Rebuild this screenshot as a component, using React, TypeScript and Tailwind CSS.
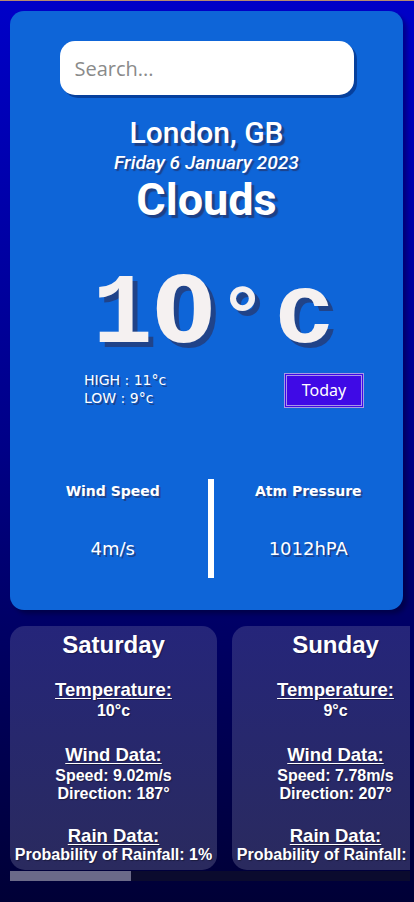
import React from 'react'

type Day = {
  name: string
  temp: string
  speed: string
  direction: string
  rain: string
}

const FORECAST: Day[] = [
  { name: 'Saturday', temp: '10°c', speed: '9.02m/s', direction: '187°', rain: '1%' },
  { name: 'Sunday', temp: '9°c', speed: '7.78m/s', direction: '207°', rain: '3%' },
  { name: 'Monday', temp: '8°c', speed: '6.41m/s', direction: '221°', rain: '12%' },
  { name: 'Tuesday', temp: '7°c', speed: '5.12m/s', direction: '245°', rain: '24%' },
  { name: 'Wednesday', temp: '9°c', speed: '8.33m/s', direction: '198°', rain: '40%' },
  { name: 'Thursday', temp: '11°c', speed: '6.07m/s', direction: '176°', rain: '8%' },
]

function ForecastCard({ day }: { day: Day }) {
  return (
    <div className="shrink-0 w-[207px] h-[244px] rounded-[15px] bg-linear-to-b from-[#25257a] to-[#2a2a5e] pt-[5px] text-center text-white font-bold font-['Liberation_Sans',Arial,sans-serif] [text-shadow:1px_1px_1px_rgba(0,0,0,0.35)]">
      <h2 className="text-[24px] leading-[27.6px]">{day.name}</h2>
      <div className="mt-[21px]">
        <h3 className="text-[18.5px] leading-[21px] underline underline-offset-[2px]">Temperature:</h3>
        <p className="mt-[2px] text-[16px] leading-[18.4px]">{day.temp}</p>
      </div>
      <div className="mt-[23px]">
        <h3 className="text-[18.5px] leading-[21px] underline underline-offset-[2px]">Wind Data:</h3>
        <p className="mt-[2px] text-[16px] leading-[18.4px]">Speed: {day.speed}</p>
        <p className="text-[16px] leading-[18.4px]">Direction: {day.direction}</p>
      </div>
      <div className="mt-[22px]">
        <h3 className="text-[18.5px] leading-[21px] underline underline-offset-[2px]">Rain Data:</h3>
        <p className="whitespace-nowrap text-[16px] leading-[18.4px]">Probability of Rainfall: {day.rain}</p>
      </div>
    </div>
  )
}

export default function App() {
  return (
    <div className="min-h-screen w-full border-t border-[#b88a70] bg-linear-to-b from-[#0000c8] via-[#000086] to-[#000036] pt-[10px] pb-[21px]">
      <div className="mx-[10px] w-[393px] rounded-[14px] bg-[#0e65d8] shadow-[4px_4px_4px_rgba(0,0,0,0.28)] pt-[30px] pb-[32px]">
        <div className="flex justify-center">
          <input
            placeholder="Search..."
            className="w-[294px] h-[54px] rounded-[15px] bg-white px-[15px] text-[20px] text-[#333] placeholder:text-[#8a8a8a] font-['Open_Sans','Noto_Sans',sans-serif] shadow-[3px_3px_0_rgba(0,35,110,0.55)] outline-none"
          />
        </div>

        <div className="mt-[20px] text-center text-white font-['Roboto',sans-serif]">
          <h1 className="text-[30px] leading-[35px] font-medium [text-shadow:3px_3px_1px_rgba(40,40,80,0.6)]">London, GB</h1>
          <p className="mt-[2px] text-[19.2px] leading-[22.5px] italic font-medium [text-shadow:2px_2px_1px_rgba(40,40,80,0.6)]">
            Friday 6 January 2023
          </p>
          <p className="text-[45px] leading-[50px] font-bold [text-shadow:3px_3px_1px_rgba(40,40,80,0.6)]">Clouds</p>
        </div>

        <div className="mt-[41px] h-[100px] pl-[14px] text-center text-[100px] leading-[100px] font-bold text-[#f5f1f1] font-['Liberation_Mono',monospace] [text-shadow:5px_5px_0_rgba(45,45,85,0.6)]">
          1
          <span className="inline-block w-[58px] text-center text-[90px] leading-[90px] font-['DejaVu_Sans',sans-serif]">0</span>
          <span className="inline-block w-[64px] text-center text-[80px] leading-[80px]">°</span>c
        </div>

        <div className="mt-[4px] flex items-start justify-between pl-[74px] pr-[39px]">
          <div className="pt-[1px] text-[14px] leading-[18.5px] text-white font-['DejaVu_Sans',sans-serif] [text-shadow:2px_2px_0_rgba(40,40,80,0.55)]">
            <p>HIGH : 11°c</p>
            <p>LOW : 9°c</p>
          </div>
          <button className="mt-[3px] w-[80px] h-[35px] border-[3px] border-double border-[#a898e6] bg-[#3f0ae6] text-[16px] text-white font-['Noto_Sans',sans-serif]">
            Today
          </button>
        </div>

        <div className="mt-[71px] flex h-[99px] pl-[8px]">
          <div className="flex-1 pt-[4px] text-center text-white font-['DejaVu_Sans',sans-serif] [text-shadow:2px_2px_0_rgba(40,40,80,0.55)]">
            <p className="text-[14px] leading-[16px] font-bold">Wind Speed</p>
            <p className="mt-[39px] text-[18px] leading-[21px]">4m/s</p>
          </div>
          <div className="w-[6px] bg-white" />
          <div className="flex-1 pt-[4px] text-center text-white font-['DejaVu_Sans',sans-serif] [text-shadow:2px_2px_0_rgba(40,40,80,0.55)]">
            <p className="text-[14px] leading-[16px] font-bold">Atm Pressure</p>
            <p className="mt-[39px] text-[18px] leading-[21px]">1012hPA</p>
          </div>
        </div>
      </div>

      <div className="mt-[16px] ml-[10px] w-[400px]">
        <div className="flex gap-[15px] overflow-hidden">
          {FORECAST.map((day) => (
            <ForecastCard key={day.name} day={day} />
          ))}
        </div>
        <div className="mt-[1px] h-[10px] bg-[#0b0b2e]">
          <div className="h-full w-[121px] bg-[#6b6a89]" />
        </div>
      </div>
    </div>
  )
}
